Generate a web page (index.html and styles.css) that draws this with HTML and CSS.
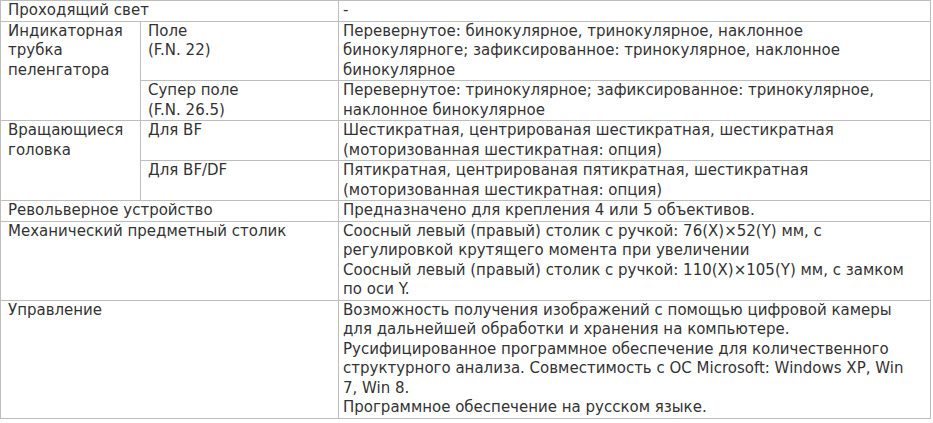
FILE: index.html
```html
<!DOCTYPE html>
<html lang="ru">
<head>
<meta charset="utf-8">
<link rel="stylesheet" href="styles.css">
</head>
<body>
<table class="spec">
  <colgroup>
    <col class="c1"><col class="c2"><col class="c3">
  </colgroup>
  <tr>
    <td colspan="2">Проходящий свет</td>
    <td class="val">-</td>
  </tr>
  <tr>
    <td rowspan="2">Индикаторная трубка пеленгатора</td>
    <td>Поле<br>(F.N. 22)</td>
    <td class="val">Перевернутое: бинокулярное, тринокулярное, наклонное бинокулярноге; зафиксированное: тринокулярное, наклонное бинокулярное</td>
  </tr>
  <tr>
    <td>Супер поле<br>(F.N. 26.5)</td>
    <td class="val">Перевернутое: тринокулярное; зафиксированное: тринокулярное, наклонное бинокулярное</td>
  </tr>
  <tr>
    <td rowspan="2">Вращающиеся головка</td>
    <td>Для BF</td>
    <td class="val">Шестикратная, центрированая шестикратная, шестикратная (моторизованная шестикратная: опция)</td>
  </tr>
  <tr>
    <td>Для BF/DF</td>
    <td class="val">Пятикратная, центрированая пятикратная, шестикратная (моторизованная шестикратная: опция)</td>
  </tr>
  <tr>
    <td colspan="2">Револьверное устройство</td>
    <td class="val">Предназначено для крепления 4 или 5 объективов.</td>
  </tr>
  <tr>
    <td colspan="2">Механический предметный столик</td>
    <td class="val">Соосный левый (правый) столик с ручкой: 76(X)×52(Y) мм, с регулировкой крутящего момента при увеличении<br>Соосный левый (правый) столик с ручкой: 110(X)×105(Y) мм, с замком по оси Y.</td>
  </tr>
  <tr>
    <td colspan="2">Управление</td>
    <td class="val">Возможность получения изображений с помощью цифровой камеры для дальнейшей обработки и хранения на компьютере.<br>Русифицированное программное обеспечение для количественного структурного анализа. Совместимость с ОС Microsoft: Windows XP, Win 7, Win 8.<br>Программное обеспечение на русском языке.</td>
  </tr>
</table>
</body>
</html>
```

FILE: styles.css
```css
html, body {
  margin: 0;
  padding: 0;
  background: #fff;
}

.spec {
  border-collapse: collapse;
  table-layout: fixed;
  width: 930px;
  font-family: "DejaVu Sans", sans-serif;
  font-size: 15px;
  line-height: 19.5px;
  color: #333;
}

.c1 { width: 140px; }
.c2 { width: 198px; }
.c3 { width: 592px; }

.spec td {
  border: 1px solid #bdbdbd;
  padding: 0 5px 0 7px;
  vertical-align: top;
}

.spec td.val {
  padding-left: 4px;
  padding-right: 14px;
}
```
